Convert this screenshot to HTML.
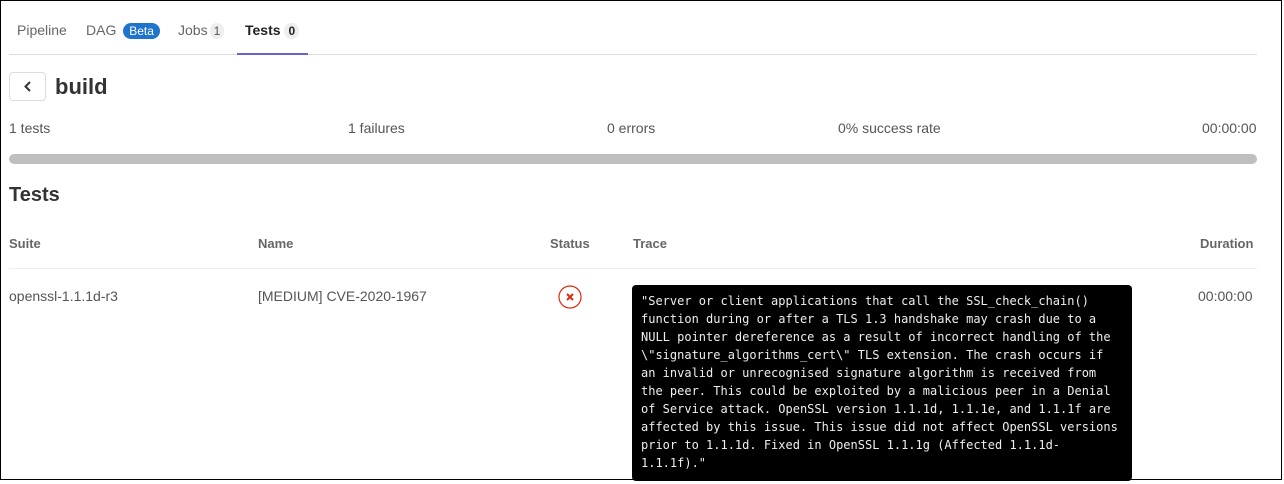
<!DOCTYPE html>
<html><head><style>
*{box-sizing:border-box;margin:0;padding:0}
body{width:1284px;height:484px;background:#fff;font-family:"Liberation Sans",sans-serif;color:#333;position:relative;overflow:hidden}
.frame{position:absolute;left:0;top:0;width:1282px;height:480px;border:1px solid #000;z-index:2}
.a{position:absolute;white-space:nowrap}
.tab{font-size:14px;color:#666;top:22px}
.badge{display:inline-block;border-radius:10px;font-size:12px;padding:1px 6px;line-height:14px}
.hd{font-size:13px;font-weight:bold;color:#666;top:236px}
.c{font-size:14px;color:#555}
pre{position:absolute;left:632px;top:285px;width:500px;height:196px;background:#000;color:#eee;border-radius:4px;font-family:"DejaVu Sans Mono",monospace;font-size:12px;line-height:18px;padding:7px 9px;margin:0}
</style></head><body>
<div class="frame"></div>
<div class="a tab" style="left:17px">Pipeline</div>
<div class="a tab" style="left:86px">DAG <span class="badge" style="background:#1f75cb;color:#fff;margin-left:3px">Beta</span></div>
<div class="a tab" style="left:178px">Jobs<span class="badge" style="background:#eee;color:#555;margin-left:2px;padding:1px 4px">1</span></div>
<div class="a tab" style="left:245px;color:#222;font-weight:bold">Tests <span class="badge" style="background:#eee;color:#222;padding:1px 4px">0</span></div>
<div class="a" style="left:9px;top:54px;width:1248px;height:1px;background:#ddd"></div>
<div class="a" style="left:237px;top:53px;width:71px;height:2px;background:#6666c4"></div>
<div class="a" style="left:9px;top:72px;width:37px;height:29px;border:1px solid #ddd;border-radius:4px"><svg width="35" height="27" viewBox="0 0 35 27"><path d="M20 9l-4.5 4.5L20 18" fill="none" stroke="#333" stroke-width="2"/></svg></div>
<div class="a" style="left:55px;top:74px;font-size:22px;font-weight:bold;color:#333">build</div>
<div class="a c" style="left:9px;top:120px">1 tests</div>
<div class="a c" style="left:348px;top:120px">1 failures</div>
<div class="a c" style="left:607px;top:120px">0 errors</div>
<div class="a c" style="left:838px;top:120px">0% success rate</div>
<div class="a c" style="left:1202px;top:120px">00:00:00</div>
<div class="a" style="left:9px;top:154px;width:1248px;height:10px;background:#bfbfbf;border-radius:5px"></div>
<div class="a" style="left:9px;top:184px;font-size:20px;font-weight:bold;color:#333">Tests</div>
<div class="a hd" style="left:9px">Suite</div>
<div class="a hd" style="left:258px">Name</div>
<div class="a hd" style="left:550px">Status</div>
<div class="a hd" style="left:633px">Trace</div>
<div class="a hd" style="left:1200px">Duration</div>
<div class="a" style="left:9px;top:268px;width:1248px;height:1px;background:#eee"></div>
<div class="a c" style="left:9px;top:288px">openssl-1.1.1d-r3</div>
<div class="a c" style="left:258px;top:288px">[MEDIUM] CVE-2020-1967</div>
<div class="a" style="left:558px;top:285px"><svg width="24" height="24" viewBox="0 0 24 24"><circle cx="12" cy="12" r="11" fill="#fff" stroke="#dd2b0e" stroke-width="1.2"/><path d="M9 9l6 6M15 9l-6 6" stroke="#dd2b0e" stroke-width="2"/></svg></div>
<pre>"Server or client applications that call the SSL_check_chain()
function during or after a TLS 1.3 handshake may crash due to a
NULL pointer dereference as a result of incorrect handling of the
\"signature_algorithms_cert\" TLS extension. The crash occurs if
an invalid or unrecognised signature algorithm is received from
the peer. This could be exploited by a malicious peer in a Denial
of Service attack. OpenSSL version 1.1.1d, 1.1.1e, and 1.1.1f are
affected by this issue. This issue did not affect OpenSSL versions
prior to 1.1.1d. Fixed in OpenSSL 1.1.1g (Affected 1.1.1d-
1.1.1f)."</pre>
<div class="a c" style="left:1198px;top:288px">00:00:00</div>
</body></html>
